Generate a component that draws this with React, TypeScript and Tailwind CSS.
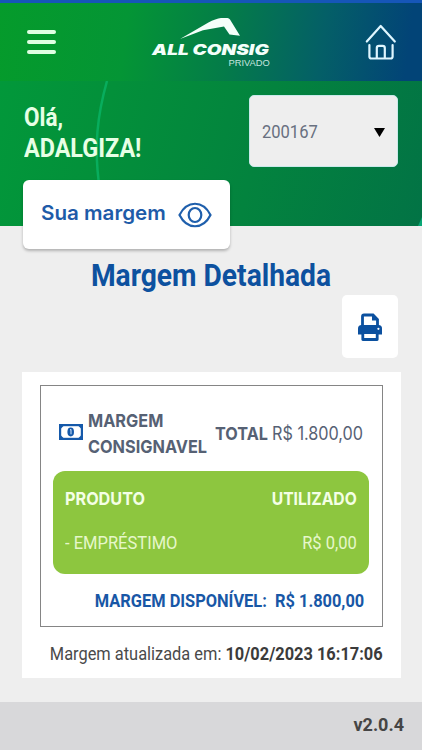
import React from 'react';

interface ProductRow {
  name: string;
  used: string;
}

const products: ProductRow[] = [{ name: 'EMPRÉSTIMO', used: 'R$ 0,00' }];

const Logo: React.FC = () => (
  <div className="ml-[84px] mt-[14px] w-[132px]">
    <svg viewBox="0 0 132 24" className="block h-6 w-[132px]" fill="none">
      <path d="M40 22 L68 5.7 Q76 1.5 81 1 H87.5 Q89 1 90 2.5 L100 18.7 L89.5 17.5 L84 9.5 L63 13.2Z" fill="#f4fffa" />
    </svg>
    <div className="ml-[12px] mt-px flex w-[118px] font-['Inter'] text-[15px] font-black italic leading-[16px] text-[#f4fffa]">
      <span className="block origin-left scale-x-[1.27] whitespace-nowrap">ALL CONSIG</span>
    </div>
    <div className="mt-px flex w-[130px] justify-end font-['Liberation_Sans'] text-[9px] leading-[9px] text-[#c5e5df]">
      <span className="block origin-right scale-x-[1.04]">PRIVADO</span>
    </div>
  </div>
);

const HomeIcon: React.FC = () => (
  <svg viewBox="0 0 32 38" className="h-[38px] w-8" fill="none" stroke="#dff6ff" strokeWidth="2.2" strokeLinecap="round" strokeLinejoin="round">
    <path d="M1.8 18.5 L15.7 3 L29.8 18.5" />
    <path d="M4.4 22 V33.5 Q4.4 35.5 6.4 35.5 H25.6 Q27.6 35.5 27.6 33.5 V22" />
    <path d="M11.8 35 V25 Q11.8 22.8 14 22.8 H17.6 Q19.8 22.8 19.8 25 V35" />
  </svg>
);

const EyeIcon: React.FC = () => (
  <svg viewBox="0 0 34 28" className="h-7 w-[34px]" fill="none" stroke="#1f5fac" strokeWidth="2.2">
    <path d="M1.5 14 C9 -1 25 -1 32.5 14 C25 29 9 29 1.5 14Z" />
    <ellipse cx="17" cy="14" rx="6.3" ry="7" />
  </svg>
);

const PrinterIcon: React.FC = () => (
  <svg viewBox="0 0 24 28" className="h-7 w-6">
    <path d="M4.5 14 V3.5 Q4.5 2 6 2 H15 L19.5 6.5 V14" fill="#fff" stroke="#0b509f" strokeWidth="2.8" />
    <path d="M14 2 V7.5 H20Z" fill="#0b509f" />
    <path d="M3.5 12 H20.5 Q24 12 24 15.5 V21.5 H0 V15.5 Q0 12 3.5 12Z" fill="#0b509f" />
    <circle cx="20.4" cy="15.8" r="1.1" fill="#fff" />
    <path d="M4.8 19.5 H19.2 V26.5 H4.8Z" fill="#fff" stroke="#0b509f" strokeWidth="2.8" strokeLinejoin="round" />
  </svg>
);

const MoneyIcon: React.FC = () => (
  <svg viewBox="0 0 24 16" className="h-4 w-6">
    <rect x="1.1" y="1.1" width="21.8" height="13.8" fill="#fff" stroke="#1559aa" strokeWidth="2.2" />
    <path d="M2 2 H4.5 L2 4.5Z M22 2 H19.5 L22 4.5Z M2 14 H4.5 L2 11.5Z M22 14 H19.5 L22 11.5Z" fill="#1559aa" />
    <ellipse cx="11.7" cy="8" rx="3.3" ry="4.4" fill="#1559aa" />
    <path d="M11 6 L12 5.4 V10.3" fill="none" stroke="#d7e9fa" strokeWidth="1" />
  </svg>
);

export default function App() {
  return (
    <div className="flex h-[750px] w-full flex-col overflow-hidden bg-[#eeeeee] font-['Roboto',sans-serif]">
      <header className="flex h-[81px] shrink-0 items-start border-t-3 border-[#1656b8] bg-[linear-gradient(97deg,#059b2b_0%,#049535_30%,#047b49_54%,#045f67_76%,#024477_96%)]">
        <button className="ml-[27px] mt-[27px] flex w-[29px] flex-col gap-[6px]">
          <span className="h-1 rounded-full bg-[#dfffe2]" />
          <span className="h-1 rounded-full bg-[#dfffe2]" />
          <span className="h-1 rounded-full bg-[#dfffe2]" />
        </button>
        <Logo />
        <button className="ml-auto mr-[25px] mt-[20px]">
          <HomeIcon />
        </button>
      </header>

      <section className="relative h-[145px] shrink-0 bg-[linear-gradient(105deg,#02983a_0%,#03903a_25%,#03833e_60%,#027345_100%)]">
        <svg viewBox="0 0 422 145" className="absolute inset-0 h-full w-full" fill="none">
          <path d="M107 0 C98 32 93 65 100 110" stroke="#08ad5d" strokeWidth="2.5" />
          <path d="M422 136 L418 145 H422Z" fill="#08a675" />
        </svg>
        <div className="relative flex justify-between pl-[24px] pr-[24px] pt-[14px]">
          <div className="mt-[7px] text-[25px] font-bold leading-[31px] text-[#e7ffe5]">
            <div className="origin-left scale-x-[0.9]">Olá,</div>
            <div className="origin-left scale-x-[0.935]">ADALGIZA!</div>
          </div>
          <button className="flex h-[72px] w-[149px] items-center justify-between rounded-[5px] border border-[#c9e9ea] bg-[#eeeeee] pl-3 pr-[12px]">
            <span className="mt-[2px] origin-left scale-x-[0.87] text-[19px] text-[#687080]">200167</span>
            <svg viewBox="0 0 11 9" className="mt-[2px] h-[9px] w-[11px]">
              <path d="M0 0 H11 L5.5 9Z" fill="#000" />
            </svg>
          </button>
        </div>
      </section>

      <div className="relative -mt-[46px] ml-[23px] flex h-[69px] w-[207px] shrink-0 items-center rounded-[6px] bg-white pl-[18px] shadow-[0_2px_3px_rgba(0,0,0,0.25)]">
        <span className="-mt-[3px] w-[137px] whitespace-nowrap font-['Inter'] text-[20px] font-semibold text-[#1e5ba8]">
          <span className="inline-block origin-left scale-x-[1.03]">Sua margem</span>
        </span>
        <EyeIcon />
      </div>

      <main className="flex shrink-0 flex-col px-[22px]">
        <h1 className="mt-[9px] text-center text-[31px] font-bold leading-[36px] text-[#0d519f]">
          <span className="inline-block origin-center scale-x-[0.91] whitespace-nowrap">Margem Detalhada</span>
        </h1>
        <button className="mr-[2px] mt-px flex h-[63px] w-[56px] items-center justify-center self-end rounded-[5px] bg-white">
          <PrinterIcon />
        </button>

        <section className="mr-[-1px] mt-[14px] h-[306px] bg-white px-[18px] pt-[13px]">
          <div className="h-[242px] border-[1.5px] border-[#858585] pl-3 pr-[13px] pt-[22px]">
            <div className="flex items-center pl-[6px] pr-[4px] font-['Inter'] text-[18px] text-[#566174]">
              <div className="-mt-[5px]">
                <MoneyIcon />
              </div>
              <div className="ml-[5px] w-[127px] whitespace-nowrap font-bold leading-[26px]">
                <div className="origin-left scale-x-[0.905]">MARGEM</div>
                <div className="origin-left scale-x-[0.905]">CONSIGNAVEL</div>
              </div>
              <div className="-mt-[2px] flex w-[148px] gap-1 whitespace-nowrap">
                <b className="inline-block w-[53px] origin-left scale-x-[0.9]">TOTAL</b>
                <span className="origin-left scale-x-[0.9]">R$ 1.800,00</span>
              </div>
            </div>

            <div className="mt-[11px] h-[103px] rounded-[12px] bg-[#8dc63f] px-3 pt-[14px]">
              <div className="flex justify-between font-['Inter'] text-[18px] font-bold leading-[27px] text-[#f4ffe5]">
                <span className="origin-left scale-x-[0.9]">PRODUTO</span>
                <span className="origin-right scale-x-[0.87]">UTILIZADO</span>
              </div>
              {products.map((p) => (
                <div key={p.name} className="mt-[17px] flex justify-between text-[19px] leading-[28px] text-[#e6f7ca]">
                  <span className="origin-left scale-x-[0.87]">- {p.name}</span>
                  <span className="origin-right scale-x-[0.87]">{p.used}</span>
                </div>
              ))}
            </div>

            <div className="mt-[13px] flex justify-end pr-[5px] text-[19px] font-bold leading-[28px] text-[#1857a6]">
              <span className="origin-right scale-x-[0.863] whitespace-pre">MARGEM DISPONÍVEL:  R$ 1.800,00</span>
            </div>
          </div>
          <p className="mt-[13px] flex justify-end text-[19px] leading-[28px] text-[#4a4a4a]">
            <span className="origin-right scale-x-[0.863] whitespace-nowrap">
              Margem atualizada em: <b className="text-[#3b3b3b]">10/02/2023 16:17:06</b>
            </span>
          </p>
        </section>
      </main>

      <footer className="mt-auto flex h-[48px] shrink-0 justify-end bg-[#d8d8da] pr-[18px] pt-[8px] text-[18px] font-bold leading-[29px] text-[#454545]">
        v2.0.4
      </footer>
    </div>
  );
}
